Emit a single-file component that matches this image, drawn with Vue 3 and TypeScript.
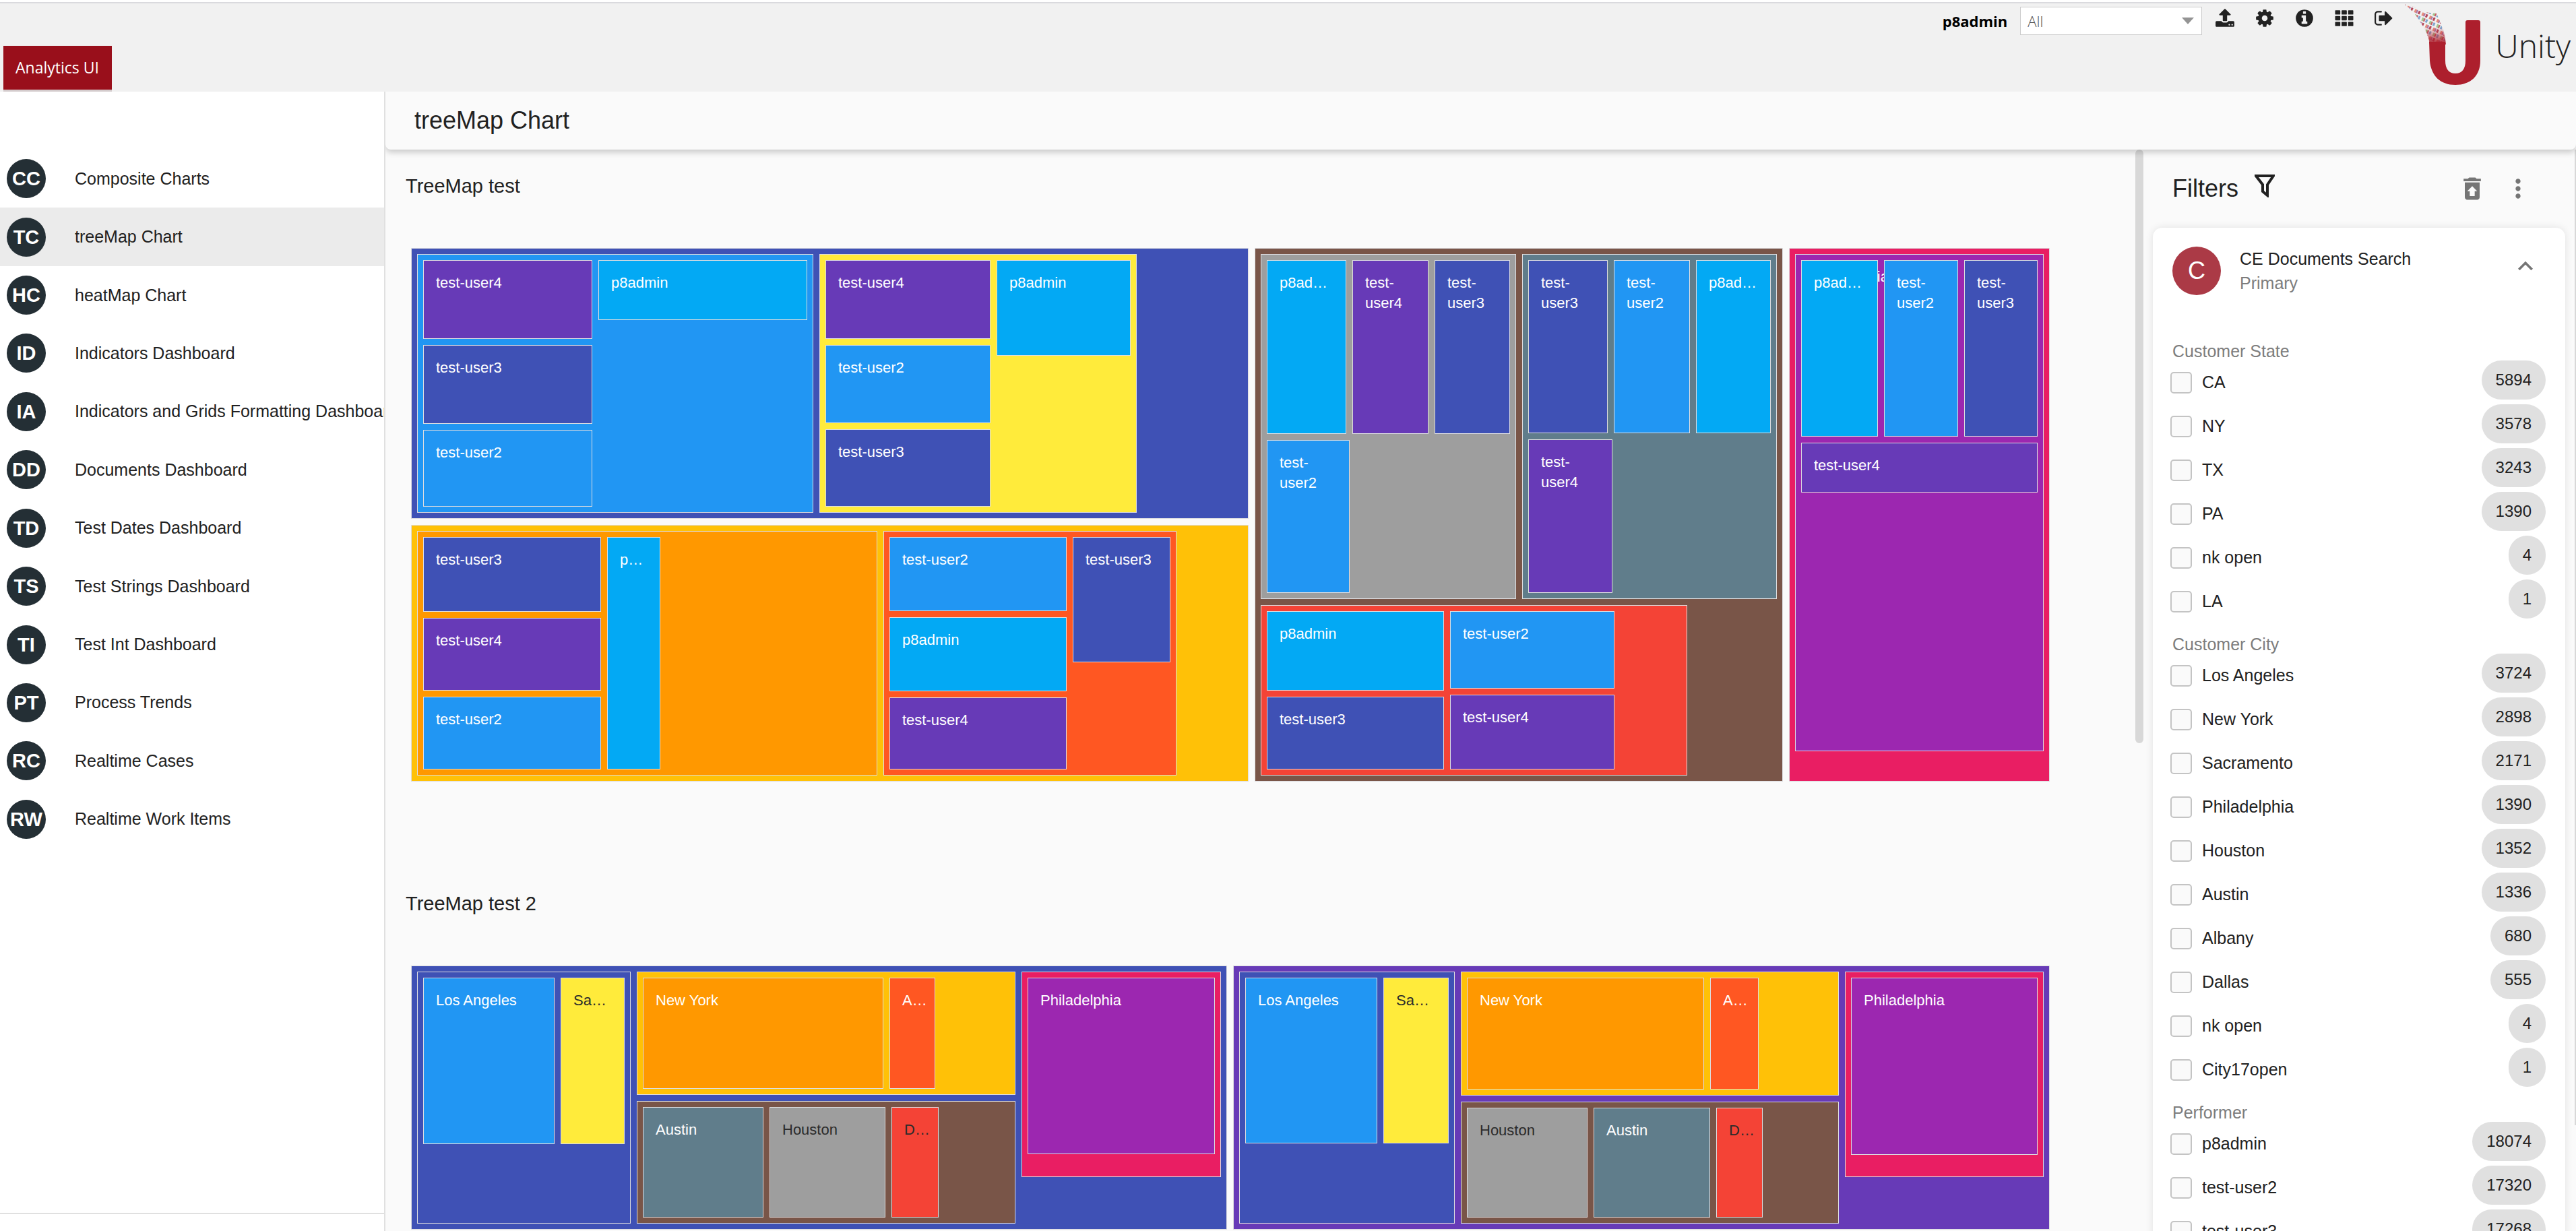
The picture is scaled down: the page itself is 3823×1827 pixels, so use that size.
<script setup lang="ts">
import { h, ref } from 'vue'
import type { FunctionalComponent, VNode } from 'vue'

interface TreeNode {
  size: number
  dir?: 'row' | 'col'
  tone?: string
  label?: string
  dark?: boolean
  children?: TreeNode[]
}

interface FilterGroup {
  title: string
  values: [string, number][]
}

const row = (size: number, children: TreeNode[], tone?: string, label?: string): TreeNode => ({ size, dir: 'row', children, tone, label })
const col = (size: number, children: TreeNode[], tone?: string, label?: string): TreeNode => ({ size, dir: 'col', children, tone, label })
const tile = (size: number, label: string, tone: string, dark = false): TreeNode => ({ size, label, tone, dark })
const rest = (size: number): TreeNode => ({ size })

const u2 = (size: number) => tile(size, 'test-user2', 'blue')
const u3 = (size: number) => tile(size, 'test-user3', 'indigo')
const u4 = (size: number) => tile(size, 'test-user4', 'deep')
const p8 = (size: number) => tile(size, 'p8admin', 'sky')

const firstMap: TreeNode = row(1, [
  col(1243, [
    row(402, [
      row(588, [
        col(251, [u4(117), u3(117), u2(114)]),
        col(310, [p8(89), rest(268)]),
      ], 'blue'),
      row(471, [
        col(245, [u4(117), u2(116), u3(115)]),
        col(199, [p8(142), rest(215)]),
      ], 'yellow'),
      rest(148),
    ], 'indigo'),
    row(381, [
      row(683, [
        col(264, [u3(111), u4(108), u2(108)]),
        p8(79),
        rest(304),
      ], 'orange'),
      row(435, [
        col(263, [u2(110), p8(110), u4(107)]),
        col(145, [u3(186), rest(150)]),
      ], 'flame'),
      rest(89),
    ], 'amber'),
  ]),
  col(784, [
    row(512, [
      col(379, [
        row(258, [p8(118), u4(113), u3(112)]),
        row(227, [u2(123), rest(229)]),
      ], 'grey'),
      col(378, [
        row(257, [u3(118), u2(113), p8(111)]),
        row(228, [u4(125), rest(226)]),
      ], 'slate'),
    ]),
    row(253, [
      row(633, [
        col(263, [p8(118), u3(108)]),
        col(244, [u2(115), u4(111)]),
        rest(90),
      ], 'red'),
      rest(124),
    ]),
  ], 'brown'),
  col(387, [
    col(738, [
      row(262, [p8(114), u2(110), u3(109)]),
      u4(74),
      rest(366),
    ], 'purple', 'Philadelphia'),
    rest(27),
  ], 'pink'),
])

const secondMap: TreeNode = row(1, [
  row(1211, [
    col(317, [
      row(247, [tile(195, 'Los Angeles', 'blue'), tile(95, 'Sacramento', 'yellow', true)]),
      rest(100),
    ], 'indigo'),
    col(562, [
      row(183, [tile(357, 'New York', 'orange'), tile(68, 'Albany', 'flame'), rest(101)], 'amber'),
      row(182, [tile(179, 'Austin', 'slate'), tile(172, 'Houston', 'grey', true), tile(70, 'Dallas', 'red', true), rest(96)], 'brown'),
    ]),
    col(296, [
      col(305, [tile(262, 'Philadelphia', 'purple'), rest(16)], 'pink'),
      rest(60),
    ]),
  ], 'indigo'),
  row(1212, [
    col(320, [
      row(246, [tile(196, 'Los Angeles', 'blue'), tile(97, 'Sacramento', 'yellow', true)]),
      rest(101),
    ], 'indigo'),
    col(561, [
      row(184, [tile(352, 'New York', 'orange'), tile(72, 'Albany', 'flame'), rest(101)], 'amber'),
      row(181, [tile(179, 'Houston', 'grey', true), tile(173, 'Austin', 'slate'), tile(69, 'Dallas', 'red', true), rest(95)], 'brown'),
    ]),
    col(295, [
      col(305, [tile(263, 'Philadelphia', 'purple'), rest(15)], 'pink'),
      rest(60),
    ]),
  ], 'deep'),
])

// Every group is a grid whose tracks are weighted by the sizes of its children.
const tracks = (node: TreeNode): Record<string, string> => {
  if (!node.children) return {}
  const list = node.children.map((child) => `minmax(0, ${child.size}fr)`).join(' ')
  return node.dir === 'col' ? { gridTemplateRows: list } : { gridTemplateColumns: list }
}

const renderNode = (node: TreeNode): VNode =>
  h(
    'div',
    {
      class: ['node', node.dir, node.tone && `tile ${node.tone}`, node.dark && 'dark'],
      style: tracks(node),
    },
    [
      node.label ? h('span', { class: ['label', node.children && 'behind'] }, node.label) : null,
      ...(node.children ?? []).map(renderNode),
    ],
  )

const TreeMap: FunctionalComponent<{ root: TreeNode }> = (props) => h('div', { class: 'treemap' }, [renderNode(props.root)])
TreeMap.props = ['root']

const menu: [string, string][] = [
  ['CC', 'Composite Charts'],
  ['TC', 'treeMap Chart'],
  ['HC', 'heatMap Chart'],
  ['ID', 'Indicators Dashboard'],
  ['IA', 'Indicators and Grids Formatting Dashboard'],
  ['DD', 'Documents Dashboard'],
  ['TD', 'Test Dates Dashboard'],
  ['TS', 'Test Strings Dashboard'],
  ['TI', 'Test Int Dashboard'],
  ['PT', 'Process Trends'],
  ['RC', 'Realtime Cases'],
  ['RW', 'Realtime Work Items'],
]
const current = ref('TC')
const scope = ref('All')

const tools: { name: string; path: string }[] = [
  { name: 'Upload', path: 'M1344 1472q0-26-19-45t-45-19-45 19-19 45 19 45 45 19 45-19 19-45zm256 0q0-26-19-45t-45-19-45 19-19 45 19 45 45 19 45-19 19-45zm128-224v320q0 40-28 68t-68 28h-1472q-40 0-68-28t-28-68v-320q0-40 28-68t68-28h427q21 56 70.5 92t110.5 36h256q61 0 110.5-36t70.5-92h427q40 0 68 28t28 68zm-325-648q-17 40-59 40h-256v448q0 26-19 45t-45 19h-256q-26 0-45-19t-19-45v-448h-256q-42 0-59-40-17-39 14-69l448-448q18-19 45-19t45 19l448 448q31 30 14 69z' },
  { name: 'Settings', path: 'M1152 896q0-106-75-181t-181-75-181 75-75 181 75 181 181 75 181-75 75-181zm512-109v222q0 12-8 23t-20 13l-185 28q-19 54-39 91 35 50 107 138 10 12 10 25t-9 23q-27 37-99 108t-94 71q-12 0-26-9l-138-108q-44 23-91 38-16 136-29 186-7 28-36 28h-222q-14 0-24.5-8.5t-11.5-21.5l-28-184q-49-16-90-37l-141 107q-10 9-25 9-14 0-25-11-126-114-165-168-7-10-7-23 0-12 8-23 15-21 51-66.5t54-70.5q-27-50-41-99l-183-27q-13-2-21-12.5t-8-23.5v-222q0-12 8-23t19-13l186-28q14-46 39-92-40-57-107-138-10-12-10-24 0-10 9-23 26-36 98.5-107.5t94.5-71.5q13 0 26 10l138 107q44-23 91-38 16-136 29-186 7-28 36-28h222q14 0 24.5 8.5t11.5 21.5l28 184q49 16 90 37l142-107q9-9 24-9 13 0 25 10 129 119 165 170 7 8 7 22 0 12-8 23-15 21-51 66.5t-54 70.5q26 50 41 98l183 28q13 2 21 12.5t8 23.5z' },
  { name: 'About', path: 'M1152 1376v-160q0-14-9-23t-23-9h-96v-512q0-14-9-23t-23-9h-320q-14 0-23 9t-9 23v160q0 14 9 23t23 9h96v320h-96q-14 0-23 9t-9 23v160q0 14 9 23t23 9h448q14 0 23-9t9-23zm-128-896v-160q0-14-9-23t-23-9h-192q-14 0-23 9t-9 23v160q0 14 9 23t23 9h192q14 0 23-9t9-23zm640 416q0 209-103 385.5t-279.5 279.5-385.5 103-385.5-103-279.5-279.5-103-385.5 103-385.5 279.5-279.5 385.5-103 385.5 103 279.5 279.5 103 385.5z' },
  { name: 'Applications', path: 'M140 192h360q50 0 50 50v280q0 50-50 50h-360q-50 0-50-50v-280q0-50 50-50zm576 0h360q50 0 50 50v280q0 50-50 50h-360q-50 0-50-50v-280q0-50 50-50zm576 0h360q50 0 50 50v280q0 50-50 50h-360q-50 0-50-50v-280q0-50 50-50zM140 706h360q50 0 50 50v280q0 50-50 50h-360q-50 0-50-50v-280q0-50 50-50zm576 0h360q50 0 50 50v280q0 50-50 50h-360q-50 0-50-50v-280q0-50 50-50zm576 0h360q50 0 50 50v280q0 50-50 50h-360q-50 0-50-50v-280q0-50 50-50zM140 1220h360q50 0 50 50v280q0 50-50 50h-360q-50 0-50-50v-280q0-50 50-50zm576 0h360q50 0 50 50v280q0 50-50 50h-360q-50 0-50-50v-280q0-50 50-50zm576 0h360q50 0 50 50v280q0 50-50 50h-360q-50 0-50-50v-280q0-50 50-50z' },
  { name: 'Sign out', path: 'M704 1440q0 4 1 20t.5 26.5-3 23.5-10 19.5-20.5 6.5h-320q-119 0-203.5-84.5t-84.5-203.5v-704q0-119 84.5-203.5t203.5-84.5h320q13 0 22.5 9.5t9.5 22.5q0 4 1 20t.5 26.5-3 23.5-10 19.5-20.5 6.5h-320q-66 0-113 47t-47 113v704q0 66 47 113t113 47h312l11.5 1 11.5 3 8 5.5 7 9 2 13.5zm928-544q0 26-19 45l-544 544q-19 19-45 19t-45-19-19-45v-288h-448q-26 0-45-19t-19-45v-384q0-26 19-45t45-19h448v-288q0-26 19-45t45-19 45 19l544 544q19 19 19 45z' },
]

const filters: FilterGroup[] = [
  { title: 'Customer State', values: [['CA', 5894], ['NY', 3578], ['TX', 3243], ['PA', 1390], ['nk open', 4], ['LA', 1]] },
  {
    title: 'Customer City',
    values: [
      ['Los Angeles', 3724], ['New York', 2898], ['Sacramento', 2171], ['Philadelphia', 1390], ['Houston', 1352],
      ['Austin', 1336], ['Albany', 680], ['Dallas', 555], ['nk open', 4], ['City17open', 1],
    ],
  },
  { title: 'Performer', values: [['p8admin', 18074], ['test-user2', 17320], ['test-user3', 17268]] },
]
</script>

<template>
  <div class="page">
    <header class="topbar">
      <button type="button" class="tab">Analytics UI</button>
      <div class="account">
        <span class="user">p8admin</span>
        <div class="scope">
          <select v-model="scope" aria-label="Search scope">
            <option>All</option>
          </select>
          <svg class="arrow" viewBox="0 0 18 10" aria-hidden="true"><path d="M0 0h18L9 10z" /></svg>
        </div>
        <div class="tools">
          <button v-for="t in tools" :key="t.name" type="button" :aria-label="t.name">
            <svg viewBox="0 0 1792 1792"><path :d="t.path" /></svg>
          </button>
        </div>
        <svg class="logo" viewBox="0 0 116 122" aria-hidden="true">
          <defs>
            <pattern id="dots" width="12" height="14" patternUnits="userSpaceOnUse" patternTransform="rotate(24)">
              <rect x="0" y="0" width="3" height="5" fill="#b4485a" />
              <rect x="6" y="0" width="3" height="5" fill="#e58a7c" />
              <rect x="3" y="7" width="3" height="5" fill="#7fa6cf" />
              <rect x="9" y="7" width="3" height="5" fill="#a3c58f" />
              <rect x="0" y="7" width="2" height="5" fill="#c75b68" />
              <rect x="9" y="0" width="2" height="5" fill="#a77bab" />
            </pattern>
            <linearGradient id="fade" x1="0" y1="0" x2="0" y2="1">
              <stop offset="0" stop-color="#ad1f2d" stop-opacity="0" />
              <stop offset="1" stop-color="#ad1f2d" />
            </linearGradient>
          </defs>
          <path d="M1 0L14 4L30 12L48 14Q58 34 61 56L38 58Q34 40 24 27Q14 10 1 1z" fill="url(#dots)" />
          <path d="M29 34H57Q61 48 62 60H38Q36 46 29 34z" fill="url(#fade)" />
          <path d="M37 56H61V84C61 96 66 103 76 103S91 96 91 84V27Q91 24 94 24H110Q113 24 113 27V84C113 107 98 120 76 120S40 107 38 84z" fill="#ad1f2d" />
        </svg>
        <span class="brand">Unity</span>
      </div>
    </header>

    <div class="body">
      <aside class="sidebar">
        <nav>
          <ul>
            <li v-for="[code, name] in menu" :key="code" :class="{ active: code === current }">
              <a href="#" @click.prevent="current = code"><span class="badge">{{ code }}</span>{{ name }}</a>
            </li>
          </ul>
        </nav>
        <div class="sidebar-foot"></div>
      </aside>

      <div class="workspace">
        <div class="titlebar"><h1>treeMap Chart</h1></div>
        <div class="panes">
          <main class="charts">
            <section>
              <h2>TreeMap test</h2>
              <TreeMap class="tall" :root="firstMap" />
            </section>
            <section>
              <h2>TreeMap test 2</h2>
              <TreeMap class="short" :root="secondMap" />
            </section>
          </main>
          <div class="thumb charts-thumb"></div>
          <section class="filters">
            <div class="filters-head">
              <h2>Filters</h2>
              <svg class="funnel" viewBox="0 0 30 34" aria-hidden="true"><path d="M2 2H28L19 15V31L12 25V15z" /></svg>
              <button type="button" aria-label="Reset filters">
                <svg viewBox="0 0 24 24"><path d="M19 4h-3.5l-1-1h-5l-1 1H5v2h14V4zM6 7v12c0 1.1.9 2 2 2h8c1.1 0 2-.9 2-2V7H6zm8 7v4h-4v-4H8l4-4 4 4h-2z" /></svg>
              </button>
              <button type="button" aria-label="More actions">
                <svg viewBox="0 0 24 24"><path d="M12 8c1.1 0 2-.9 2-2s-.9-2-2-2-2 .9-2 2 .9 2 2 2zm0 2c-1.1 0-2 .9-2 2s.9 2 2 2 2-.9 2-2-.9-2-2-2zm0 6c-1.1 0-2 .9-2 2s.9 2 2 2 2-.9 2-2-.9-2-2-2z" /></svg>
              </button>
            </div>
            <div class="card">
              <div class="source">
                <span class="source-badge">C</span>
                <div class="source-text">
                  <strong>CE Documents Search</strong>
                  <span>Primary</span>
                </div>
                <button type="button" aria-label="Collapse">
                  <svg viewBox="0 0 24 24"><path d="M12 8l-6 6 1.41 1.41L12 10.83l4.59 4.58L18 14z" /></svg>
                </button>
              </div>
              <fieldset v-for="g in filters" :key="g.title">
                <legend>{{ g.title }}</legend>
                <label v-for="[name, count] in g.values" :key="name" class="option">
                  <input type="checkbox" />
                  <span class="name">{{ name }}</span>
                  <span class="count">{{ count }}</span>
                </label>
              </fieldset>
            </div>
          </section>
          <div class="thumb page-thumb"></div>
        </div>
      </div>
    </div>
  </div>
</template>

<style>
body {
  margin: 0;
  overflow: hidden;
}
</style>

<style scoped>
.page {
  display: flex;
  flex-direction: column;
  height: 100vh;
  overflow: hidden;
  background: #fafafa;
  color: #212121;
  font-family: 'Liberation Sans', Arial, sans-serif;
  font-size: 25px;
}
button {
  padding: 0;
  border: 0;
  background: none;
  font: inherit;
  color: inherit;
  cursor: pointer;
}
svg {
  display: block;
}
h1,
h2 {
  margin: 0;
  font-weight: 400;
}

/* top bar */
.topbar {
  display: flex;
  justify-content: space-between;
  flex: none;
  height: 131px;
  margin-top: 3px;
  border-top: 2px solid #dadade;
  background: #f1f1f1;
  box-shadow: 0 -3px 0 #fff;
  font-family: 'Open Sans', 'Noto Sans', sans-serif;
}
.tab {
  align-self: flex-end;
  height: 68px;
  margin-left: 5px;
  padding: 0 19px 2px 18px;
  border-bottom: 3px solid #d4cccd;
  background: #990f1b;
  color: #fff;
  font-size: 23px;
}
.account {
  display: flex;
  align-items: flex-start;
  padding-right: 8px;
}
.user {
  margin: 11px 19px 0 0;
  color: #000;
  font-size: 22px;
  line-height: 30px;
  font-weight: 700;
}
.scope {
  position: relative;
  margin: 5px 19px 0 0;
}
.scope select {
  display: block;
  width: 270px;
  height: 42px;
  padding: 0 10px;
  border: 1px solid #ccc;
  border-radius: 0;
  appearance: none;
  background: #fff;
  color: #555;
  font: 300 22px 'Open Sans', sans-serif;
}
.arrow {
  position: absolute;
  top: 16px;
  right: 12px;
  width: 18px;
  height: 10px;
  fill: #949494;
  pointer-events: none;
}
.tools {
  display: flex;
  gap: 29px;
  margin: 7px 15px 0 0;
}
.tools svg {
  width: 30px;
  height: 30px;
  fill: #222;
}
.logo {
  width: 116px;
  height: 122px;
  margin: 1px 19px 0 0;
}
.brand {
  margin-top: 31px;
  color: #222;
  font-size: 48px;
  line-height: 64px;
  font-weight: 300;
}

/* frame */
.body {
  display: flex;
  flex: 1;
  min-height: 0;
}
.sidebar {
  display: flex;
  flex-direction: column;
  justify-content: space-between;
  flex: none;
  box-sizing: border-box;
  width: 572px;
  border-right: 2px solid #e0e0e0;
  background: #fff;
}
.sidebar ul {
  display: grid;
  grid-template-columns: minmax(0, 1fr);
  grid-auto-rows: 1fr;
  height: 1037px;
  margin: 86px 0 0;
  padding: 0;
  list-style: none;
}
.sidebar a {
  display: flex;
  align-items: center;
  gap: 43px;
  height: 100%;
  padding-left: 10px;
  overflow: hidden;
  color: #212121;
  text-decoration: none;
  white-space: nowrap;
}
.sidebar .active {
  background: #ebebeb;
}
.badge {
  flex: none;
  width: 58px;
  height: 58px;
  border-radius: 50%;
  background: #242f35;
  color: #fff;
  font-size: 29px;
  line-height: 58px;
  font-weight: 700;
  text-align: center;
}
.sidebar-foot {
  height: 25px;
  border-top: 2px solid #e0e0e0;
}
.workspace {
  display: flex;
  flex-direction: column;
  flex: 1;
  min-width: 0;
  overflow: hidden;
}
.titlebar {
  position: relative;
  z-index: 1;
  flex: none;
  height: 86px;
  padding-left: 43px;
  border-radius: 0 0 8px 8px;
  background: #fafafa;
  box-shadow: 0 4px 10px rgba(0, 0, 0, 0.2);
}
h1 {
  font-size: 36px;
  line-height: 86px;
}
.panes {
  display: flex;
  flex: 1;
  min-height: 0;
}
.charts {
  flex: 1;
  min-width: 0;
  padding: 34px 127px 0 38px;
  overflow: hidden;
}
.charts h2 {
  margin: 0 0 72px -8px;
  font-size: 29px;
  line-height: 40px;
}
.charts section + section {
  margin-top: 161px;
}
.thumb {
  flex: none;
  background: #d8d8d8;
}
.charts-thumb {
  width: 12px;
  height: 881px;
  border-radius: 6px;
}
.page-thumb {
  width: 2px;
  height: 1448px;
}

/* tree maps */
.treemap {
  display: grid;
}
.tall {
  height: 792px;
}
.short {
  height: 392px;
}
.treemap :deep(.node) {
  position: relative;
  display: grid;
  gap: 9px;
  box-sizing: border-box;
  min-width: 0;
  min-height: 0;
}
.treemap :deep(.row) {
  grid-template-rows: minmax(0, 1fr);
}
.treemap :deep(.col) {
  grid-template-columns: minmax(0, 1fr);
}
.treemap :deep(.tile) {
  align-items: stretch;
  border: 1px solid #dddde0;
  color: #fff;
}
.treemap :deep(.tile.row),
.treemap :deep(.tile.col) {
  padding: 8px;
}
.treemap :deep(.label) {
  box-sizing: border-box;
  min-width: 0;
  padding: 18px;
  overflow: hidden;
  font-size: 22px;
  line-height: 30px;
  text-overflow: ellipsis;
}
.treemap :deep(.behind) {
  position: absolute;
  top: 0;
  left: 0;
}
.treemap :deep(.dark) {
  color: #2b2b2b;
}
.treemap :deep(.indigo) { background: #3f51b5; }
.treemap :deep(.blue) { background: #2196f3; }
.treemap :deep(.sky) { background: #03a9f4; }
.treemap :deep(.deep) { background: #673ab7; }
.treemap :deep(.yellow) { background: #ffeb3b; }
.treemap :deep(.amber) { background: #ffc107; }
.treemap :deep(.orange) { background: #ff9800; }
.treemap :deep(.flame) { background: #ff5722; }
.treemap :deep(.red) { background: #f44336; }
.treemap :deep(.brown) { background: #795548; }
.treemap :deep(.grey) { background: #9e9e9e; }
.treemap :deep(.slate) { background: #607d8b; }
.treemap :deep(.pink) { background: #e91e63; }
.treemap :deep(.purple) { background: #9c27b0; }

/* filters */
.filters {
  flex: none;
  box-sizing: border-box;
  width: 640px;
  padding: 0 14px;
  overflow: hidden;
}
.filters button svg {
  width: 44px;
  height: 44px;
  fill: #757575;
}
.filters-head {
  display: flex;
  align-items: center;
  gap: 24px;
  height: 116px;
  padding: 0 48px 0 29px;
}
.filters-head h2 {
  font-size: 36px;
  line-height: 40px;
}
.funnel {
  width: 30px;
  height: 34px;
  margin: 0 auto 8px 0;
  fill: none;
  stroke: #212121;
  stroke-width: 4;
}
.card {
  padding: 28px 29px 0;
  border-radius: 14px;
  background: #fff;
  box-shadow: 0 0 12px rgba(0, 0, 0, 0.1);
}
.source {
  display: flex;
  align-items: center;
  gap: 28px;
  margin-bottom: 52px;
}
.source-badge {
  width: 72px;
  height: 72px;
  border-radius: 50%;
  background: #ab3a46;
  color: #fff;
  font-size: 36px;
  line-height: 72px;
  text-align: center;
}
.source-text {
  display: flex;
  flex-direction: column;
  flex: 1;
  line-height: 36px;
}
.source-text strong {
  font-weight: 400;
}
.source-text span {
  color: #7d7d7d;
}
.source button {
  margin: 0 8px 14px 0;
}
fieldset {
  min-width: 0;
  margin: 0;
  padding: 0;
  border: 0;
}
legend {
  padding: 17px 0 0;
  color: #7d7d7d;
  line-height: 28px;
}
.option {
  display: flex;
  align-items: center;
  height: 65px;
}
.option input {
  flex: none;
  box-sizing: border-box;
  width: 32px;
  height: 32px;
  margin: 0 15px 0 -3px;
  border: 2px solid #c4c4c4;
  border-radius: 5px;
  appearance: none;
  background: #fafafa;
}
.name {
  flex: 1;
}
.count {
  align-self: flex-start;
  padding: 0 21px;
  border-radius: 29px;
  background: #e0e0e0;
  font-size: 24px;
  line-height: 58px;
}
</style>
